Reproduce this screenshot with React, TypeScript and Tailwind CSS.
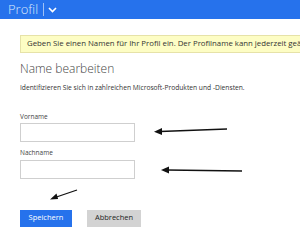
export default function App() {
  return (
    <div className="relative h-[244px] w-[300px] overflow-hidden bg-white font-['Open_Sans','Noto_Sans',sans-serif] text-[#222]">
      <header className="flex h-[19px] items-center bg-[#2672ec] pl-2 text-[13px] leading-none text-[#dce8fb]">
        <span className="font-light">Profil</span>
        <span className="ml-[5px] h-[13px] w-px bg-[#9fc0f5]" />
        <svg className="ml-[4px]" width="9" height="6" viewBox="0 0 9 6">
          <path d="M1 1l3.5 3.5L8 1" fill="none" stroke="#ffffff" strokeWidth="1.6" />
        </svg>
      </header>

      <main className="pl-5">
        <div className="mt-[16px] flex h-[18px] w-[300px] items-center border border-[#e6e2a8] bg-[#fdfdc4] pl-[6px] text-[7.8px] whitespace-nowrap text-[#333]">
          Geben Sie einen Namen für Ihr Profil ein. Der Profilname kann jederzeit geändert werden.
        </div>

        <h1 className="mt-[10px] text-[12px] leading-none font-light text-[#444]">Name bearbeiten</h1>
        <p className="mt-[10px] text-[6.7px] leading-none whitespace-nowrap text-[#333]">
          Identifizieren Sie sich in zahlreichen Microsoft-Produkten und -Diensten.
        </p>

        <label className="mt-[22px] block text-[6.5px] leading-none text-[#444]">Vorname</label>
        <input className="mt-[3px] block h-[19px] w-[115px] border border-[#cfcfcf] bg-white outline-none" />

        <label className="mt-[8px] block text-[6.5px] leading-none text-[#444]">Nachname</label>
        <input className="mt-[3px] block h-[19px] w-[115px] border border-[#cfcfcf] bg-white outline-none" />

        <div className="mt-[31px] flex gap-[15px]">
          <button className="h-[17px] w-[52px] bg-[#2672ec] text-[7.5px] leading-none text-white">Speichern</button>
          <button className="h-[17px] w-[54px] bg-[#d3d3d3] text-[7.5px] leading-none text-[#222]">Abbrechen</button>
        </div>
      </main>

      <svg className="pointer-events-none absolute inset-0" width="300" height="244" viewBox="0 0 300 244">
        <g stroke="#111" strokeWidth="1.3" fill="#111">
          <line x1="227" y1="129" x2="160" y2="131.5" />
          <path d="M154 131.7l8-3.6v7z" stroke="none" />
          <line x1="242" y1="171" x2="167" y2="170" />
          <path d="M161 170l8-3.4v6.8z" stroke="none" />
          <line x1="77" y1="190" x2="55" y2="197.5" />
          <path d="M50 199.5l6.5-6 1.6 5.6z" stroke="none" />
        </g>
      </svg>
    </div>
  );
}
